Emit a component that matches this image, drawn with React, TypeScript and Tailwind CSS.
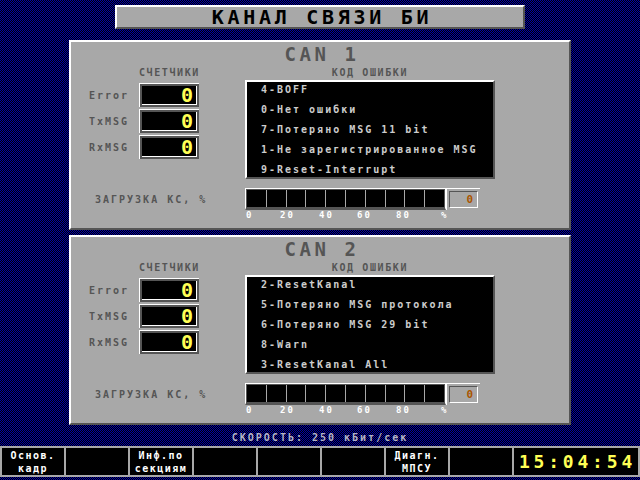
import React from "react";

const can1 = ["4-BOFF", "0-Нет ошибки", "7-Потеряно MSG 11 bit", "1-Не зарегистрированное MSG", "9-Reset-Interrupt"];
const can2 = ["2-ResetKanal", "5-Потеряно MSG протокола", "6-Потеряно MSG 29 bit", "8-Warn", "3-ResetKanal All"];

const counters = ["Error", "TxMSG", "RxMSG"];
const axis = [
  { label: "0", w: "w-[34px]" },
  { label: "20", w: "w-[39px]" },
  { label: "40", w: "w-[38px]" },
  { label: "60", w: "w-[39px]" },
  { label: "80", w: "w-[45px]" },
  { label: "%", w: "w-[10px]" },
];

// dithered blue/black backdrop, drawn pixel by pixel
function Dither() {
  return (
    <svg className="absolute inset-0" width="640" height="480" shapeRendering="crispEdges">
      <defs>
        <pattern id="dither" width="2" height="2" patternUnits="userSpaceOnUse">
          <rect width="2" height="2" fill="#000000" />
          <rect x="0" y="0" width="1" height="1" fill="#0000aa" />
          <rect x="1" y="1" width="1" height="1" fill="#0000aa" />
        </pattern>
      </defs>
      <rect width="640" height="480" fill="url(#dither)" />
    </svg>
  );
}

function CounterBox() {
  return (
    <div className="w-[60px] h-[24px] border-t border-l border-white bg-[#555555] p-[2px]">
      <div className="h-full bg-black border-b border-r border-white flex items-center justify-end pr-[3px] font-['DejaVu_Sans_Mono',monospace] font-bold text-[20px] leading-none text-[#ffff55]">
        0
      </div>
    </div>
  );
}

function CanPanel({ title, codes }: { title: string; codes: string[] }) {
  return (
    <div className="mx-auto w-[502px] h-[190px] bg-[#a8a8a8] border-2 border-t-white border-l-white border-r-[#555555] border-b-[#555555] flex flex-col font-['DejaVu_Sans_Mono',monospace] font-bold">
      {/* Title */}
      <div className="h-[24px] flex items-center justify-center text-[19px] leading-none tracking-[3.6px] text-[#555555] pl-[4px]">
        {title}
      </div>

      <div className="flex">
        {/* Counters */}
        <div className="pl-[18px] flex flex-col">
          <div className="h-[14px] ml-[50px] text-[10px] leading-[14px] tracking-[1.6px] text-[#555555]">СЧЕТЧИКИ</div>
          <div className="mt-[3px] flex flex-col gap-[2px]">
            {counters.map((c) => (
              <div key={c} className="flex items-center h-[24px]">
                <span className="w-[50px] text-[10px] tracking-[2px] text-[#555555]">{c}</span>
                <CounterBox />
              </div>
            ))}
          </div>
        </div>

        {/* Error codes */}
        <div className="ml-[45px] w-[250px] flex flex-col">
          <div className="h-[14px] text-center text-[10px] leading-[14px] tracking-[1.6px] text-[#555555]">КОД ОШИБКИ</div>
          <div className="h-[99px] bg-black border-2 border-t-white border-l-white border-r-[#555555] border-b-[#555555] pl-[14px]">
            {codes.map((c) => (
              <div key={c} className="h-[20px] text-[10px] leading-[15px] tracking-[2px] text-[#cccccc] whitespace-nowrap">
                {c}
              </div>
            ))}
          </div>
        </div>
      </div>

      {/* Load */}
      <div className="mt-[9px] flex items-center">
        <div className="w-[174px] pl-[24px] text-[10px] tracking-[2px] text-[#555555]">ЗАГРУЗКА КС, %</div>
        <div className="w-[201px] h-[22px] border border-white border-b-2 border-b-[#555555] bg-[#555555] p-[1px] flex">
          {Array.from({ length: 10 }).map((_, i) => (
            <div key={i} className={i === 0 ? "flex-1 bg-black" : "flex-1 bg-black border-l border-[#a8a8a8]"} />
          ))}
        </div>
        <div className="w-[34px] h-[22px] border-t border-l border-white pl-[2px] pt-[2px]">
          <div className="w-[29px] h-[17px] border border-t-[#555555] border-l-[#555555] border-r-white border-b-white flex items-center justify-end pr-[4px] text-[11px] leading-none text-[#aa5500]">
            0
          </div>
        </div>
      </div>
      <div className="ml-[175px] flex text-[9px] leading-[10px] tracking-[2px] text-white">
        {axis.map((a) => (
          <span key={a.label} className={a.w}>
            {a.label}
          </span>
        ))}
      </div>
    </div>
  );
}

export default function App() {
  const buttons = ["Основ.\nкадр", "", "Инф.по\nсекциям", "", "", "", "Диагн.\nМПСУ", ""];
  return (
    <div className="relative w-[640px] h-[480px] overflow-hidden bg-[#000055]">
      <Dither />
      <div className="relative h-full flex flex-col pt-[5px] font-['DejaVu_Sans_Mono',monospace] font-bold">
        {/* Header */}
        <div className="mx-auto w-[410px] h-[24px] bg-[#a8a8a8] border-2 border-t-white border-l-white border-r-[#555555] border-b-[#555555] flex items-center justify-center text-[20px] leading-none tracking-[3.7px] text-black pl-[4px]">
          КАНАЛ СВЯЗИ БИ
        </div>

        <div className="mt-[11px] flex flex-col gap-[5px]">
          <CanPanel title="CAN 1" codes={can1} />
          <CanPanel title="CAN 2" codes={can2} />
        </div>

        {/* Speed */}
        <div className="h-[21px] pt-[8px] text-center text-[10px] leading-[10px] tracking-[2px] text-[#b4b4c4]">
          СКОРОСТЬ: 250 кБит/сек
        </div>

        {/* Footer buttons */}
        <div className="h-[31px] bg-[#a8a8a8] p-[2px] flex gap-[2px]">
          {buttons.map((b, i) => (
            <div key={i} className="w-[62px] bg-black flex flex-col items-center justify-center text-[10px] leading-[13px] tracking-[1.5px] text-white whitespace-pre text-center">
              {b}
            </div>
          ))}
          <div className="flex-1 bg-black flex items-center justify-center text-[18px] leading-none tracking-[3.8px] text-[#ffff55] pl-[3px]">
            15:04:54
          </div>
        </div>
      </div>
    </div>
  );
}
